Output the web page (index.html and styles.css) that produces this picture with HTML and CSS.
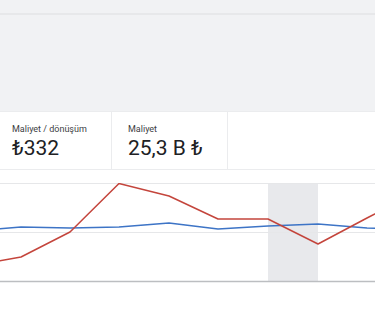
FILE: index.html
```html
<!DOCTYPE html>
<html lang="tr">
<head>
    <meta charset="UTF-8">
    <meta name="viewport" content="width=device-width, initial-scale=1.0">
    <title>Performans</title>
    <link rel="stylesheet" href="styles.css">
</head>
<body>
    <div class="topbar"></div>
    <div class="spacer"></div>

    <div class="scorecards">
        <div class="card card-first">
            <div class="card-label">Maliyet / dönüşüm</div>
            <div class="card-value">₺332</div>
        </div>
        <div class="card card-second">
            <div class="card-label">Maliyet</div>
            <div class="card-value">25,3 B ₺</div>
        </div>
        <div class="card card-rest"></div>
    </div>

    <div class="chart">
        <svg width="375" height="100" viewBox="0 0 375 100">
            <rect x="268" y="0" width="50" height="98" fill="#e8e9ec"/>
            <line x1="0" y1="0.5" x2="375" y2="0.5" stroke="#e6e7e9" stroke-width="1"/>
            <line x1="0" y1="49.5" x2="375" y2="49.5" stroke="#e6e7e9" stroke-width="1"/>
            <line x1="0" y1="98.5" x2="375" y2="98.5" stroke="#bcbec1" stroke-width="1.5"/>
            <polyline fill="none" stroke="#3d74c6" stroke-width="1.5" stroke-linejoin="round"
                points="-28,48 21,44 70,45 119,44 169,40 218,46 268,43 318,41 367,45 416,46"/>
            <polyline fill="none" stroke="#c4453c" stroke-width="1.5" stroke-linejoin="round"
                points="-28,83 21,74 70,49 119,0.5 169,13 218,36 268,36 318,61 367,35 416,10"/>
        </svg>
    </div>
</body>
</html>
```

FILE: styles.css
```css
body {
    margin: 0;
    padding: 0;
    width: 375px;
    height: 318px;
    overflow: hidden;
    background-color: #ffffff;
    font-family: Roboto, "Liberation Sans", Arial, sans-serif;
    color: #202124;
}
.topbar {
    height: 13px;
    background-color: #f1f2f4;
    border-bottom: 2px solid #e7e8ea;
}
.spacer {
    height: 96px;
    background-color: #f1f2f4;
}
.scorecards {
    display: flex;
    height: 57px;
    border-top: 1px solid #ebecee;
    border-bottom: 1px solid #ebecee;
    background: white;
}
.card {
    box-sizing: border-box;
    padding: 10px 0 0 16px;
    border-right: 1px solid #ebecee;
}
.card-first {
    width: 112px;
    padding-left: 12px;
}
.card-second {
    width: 116px;
}
.card-rest {
    flex: 1;
    border-right: none;
}
.card-label {
    font-size: 9px;
    line-height: 14px;
    color: #3c4043;
}
.card-value {
    margin-top: -1px;
    font-size: 21px;
    line-height: 26px;
    color: #202124;
}
.chart {
    margin-top: 13px;
    height: 100px;
}
.chart svg {
    display: block;
}
```
